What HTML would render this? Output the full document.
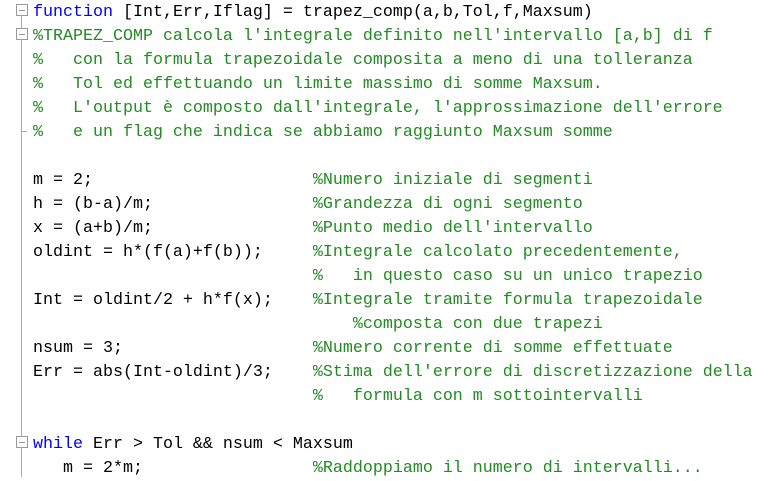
<!DOCTYPE html>
<html><head><meta charset="utf-8"><style>
body{margin:0;width:781px;height:477px;background:#fff;overflow:hidden;position:relative}
pre{position:absolute;left:33px;top:1px;margin:0;font:16.67px/24px "Liberation Mono",monospace;color:#000;white-space:pre}
.k{color:#0000ff}.c{color:#228b22}
.box{position:absolute;left:16px;width:10px;height:10px;border:1px solid #999;background:#fff}
.box:after{content:"";position:absolute;left:2px;top:5px;width:6px;height:1px;background:#999}
.vl{position:absolute;left:21px;width:1px;background:#aaa}
</style></head><body>
<div class="vl" style="top:16px;height:12px"></div>
<div class="vl" style="top:40px;height:437px"></div>
<div class="vl" style="top:131px;left:22px;width:5px;height:1px"></div>
<div class="box" style="top:4px"></div>
<div class="box" style="top:28px"></div>
<div class="box" style="top:436px"></div>
<pre><span class="k">function</span> [Int,Err,Iflag] = trapez_comp(a,b,Tol,f,Maxsum)
<span class="c">%TRAPEZ_COMP calcola l'integrale definito nell'intervallo [a,b] di f</span>
<span class="c">%   con la formula trapezoidale composita a meno di una tolleranza</span>
<span class="c">%   Tol ed effettuando un limite massimo di somme Maxsum.</span>
<span class="c">%   L'output è composto dall'integrale, l'approssimazione dell'errore</span>
<span class="c">%   e un flag che indica se abbiamo raggiunto Maxsum somme</span>

m = 2;                      <span class="c">%Numero iniziale di segmenti</span>
h = (b-a)/m;                <span class="c">%Grandezza di ogni segmento</span>
x = (a+b)/m;                <span class="c">%Punto medio dell'intervallo</span>
oldint = h*(f(a)+f(b));     <span class="c">%Integrale calcolato precedentemente,</span>
                            <span class="c">%   in questo caso su un unico trapezio</span>
Int = oldint/2 + h*f(x);    <span class="c">%Integrale tramite formula trapezoidale</span>
                                <span class="c">%composta con due trapezi</span>
nsum = 3;                   <span class="c">%Numero corrente di somme effettuate</span>
Err = abs(Int-oldint)/3;    <span class="c">%Stima dell'errore di discretizzazione della</span>
                            <span class="c">%   formula con m sottointervalli</span>

<span class="k">while</span> Err &gt; Tol &amp;&amp; nsum &lt; Maxsum
   m = 2*m;                 <span class="c">%Raddoppiamo il numero di intervalli...</span>
</pre>
</body></html>
